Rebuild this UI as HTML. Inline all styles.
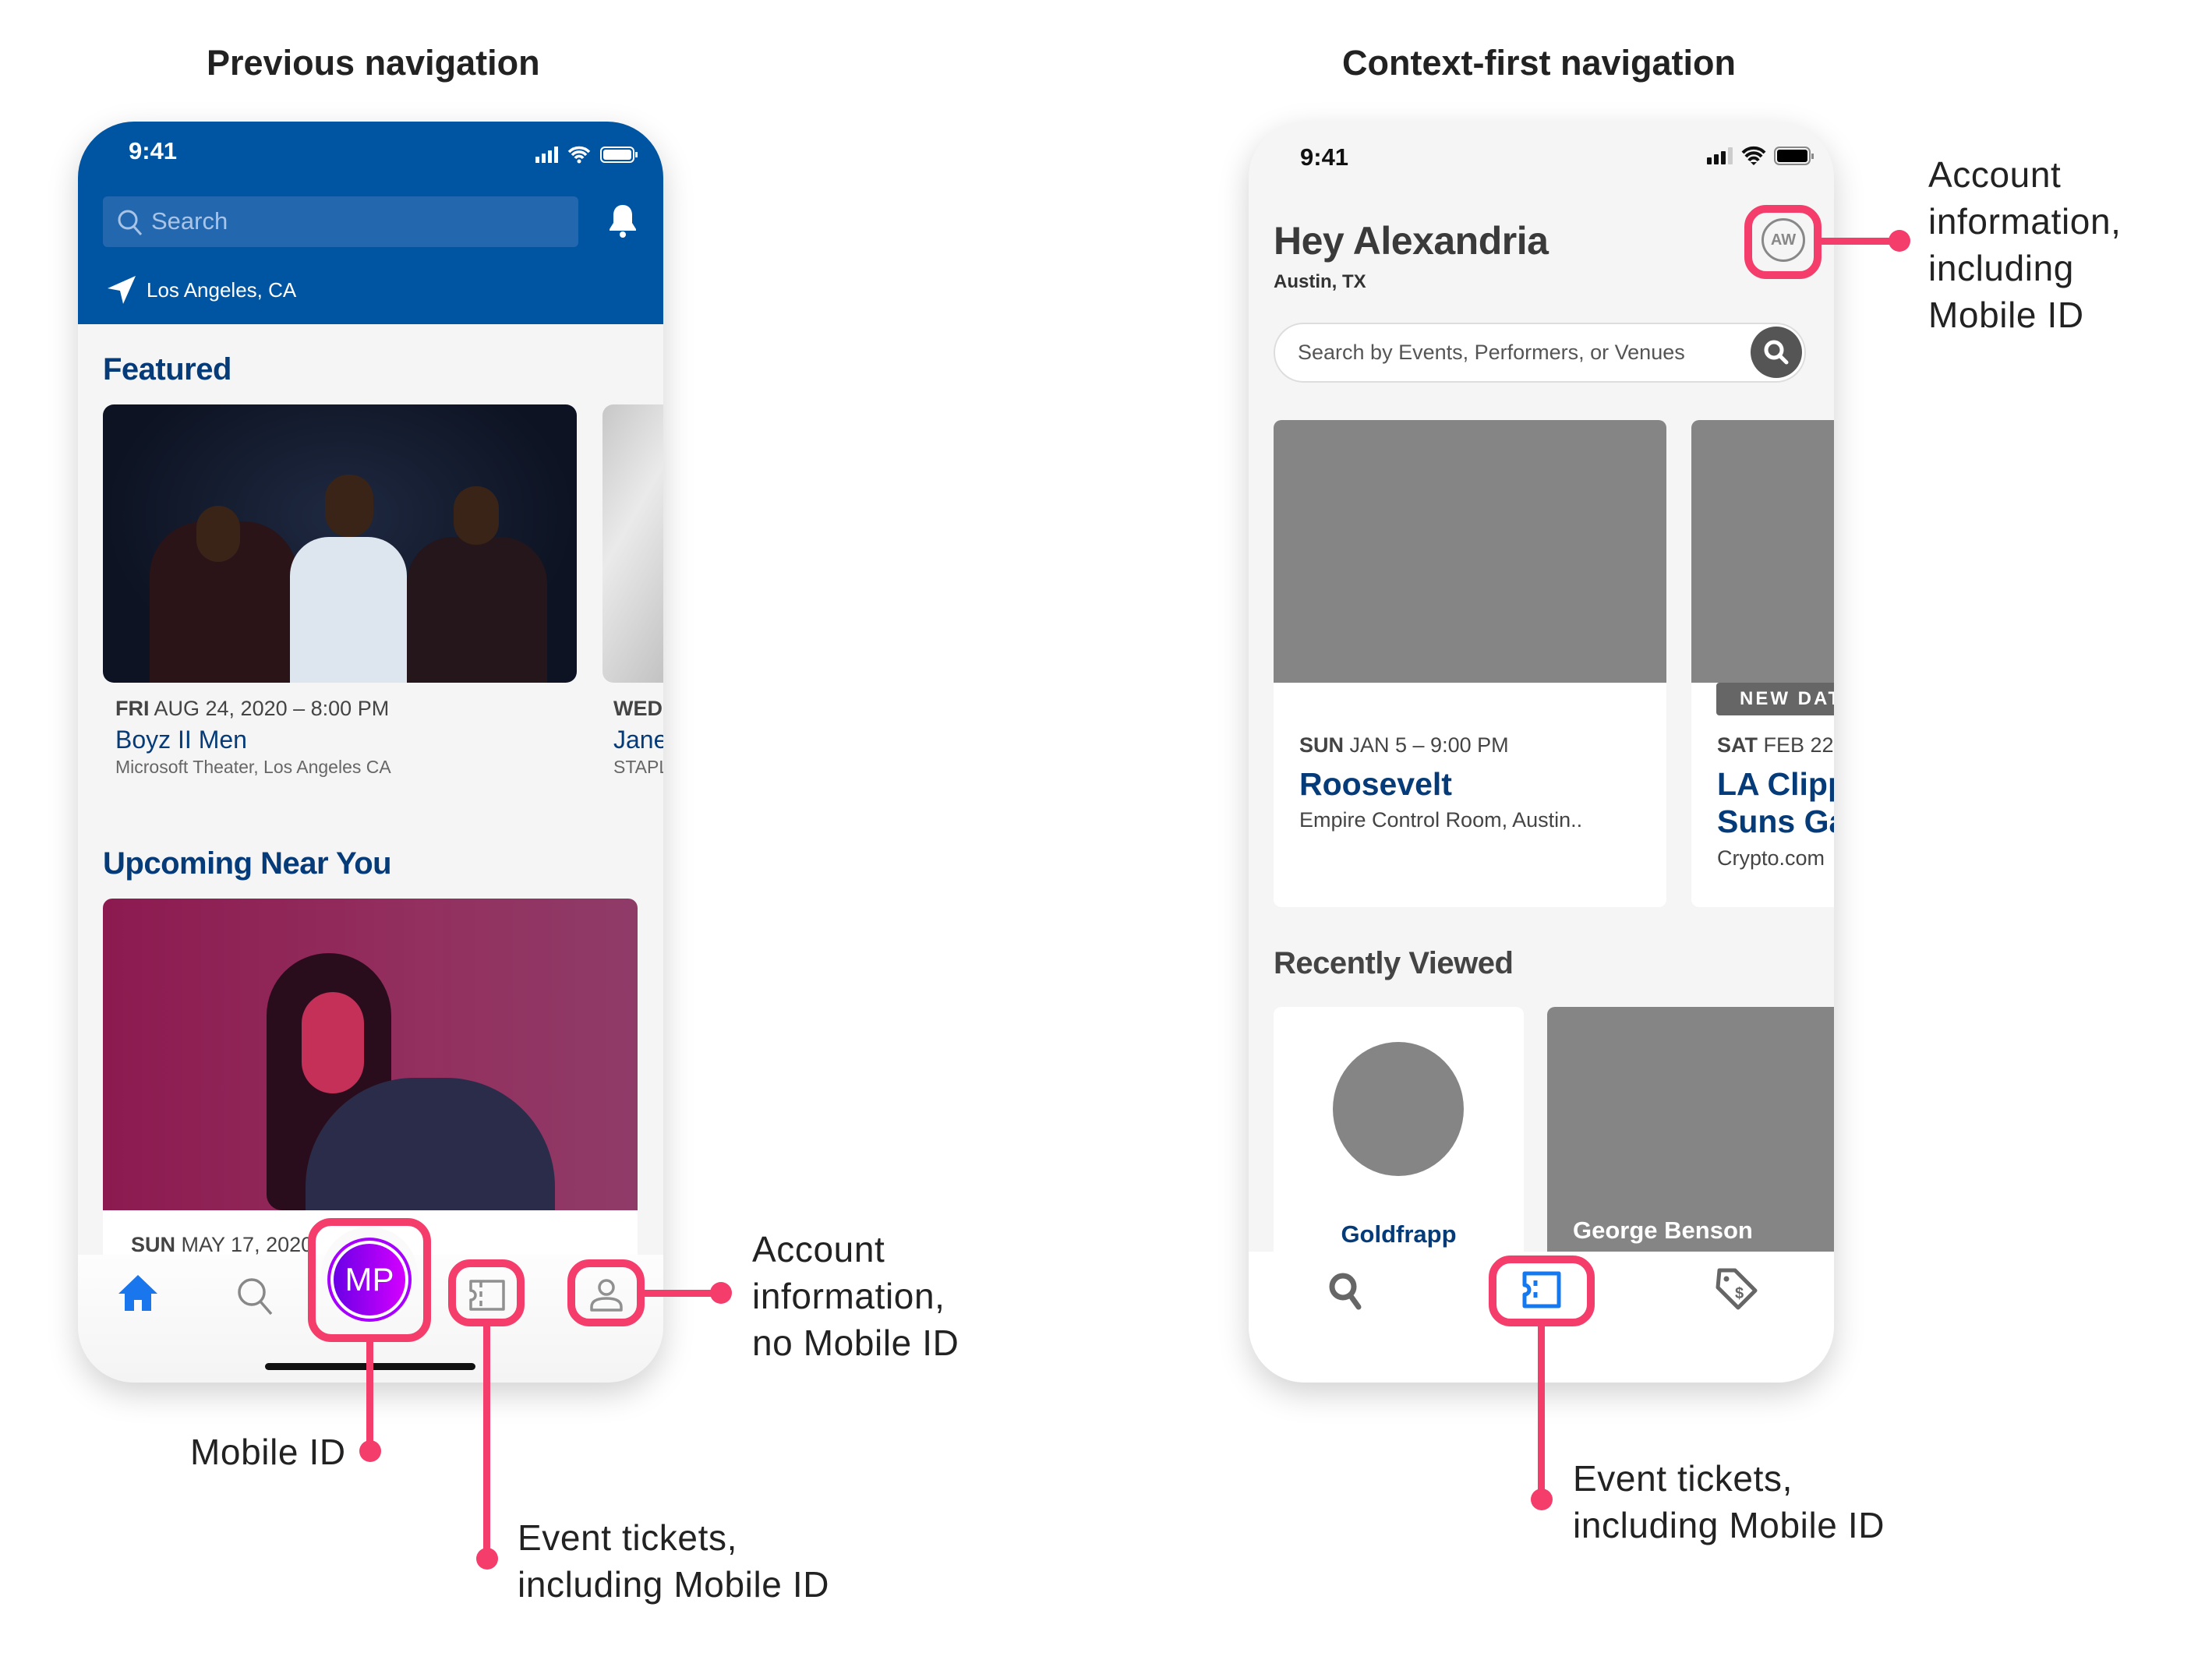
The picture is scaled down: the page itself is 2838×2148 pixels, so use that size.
<!DOCTYPE html>
<html><head><meta charset="utf-8">
<style>
*{margin:0;padding:0;box-sizing:border-box}
body{width:2838px;height:2148px;background:#fff;position:relative;overflow:hidden;font-family:"Liberation Sans",sans-serif;color:#222}
.a{position:absolute}
.t{position:absolute;white-space:nowrap;line-height:1}
.pink{border:10px solid #f53d6b;border-radius:30px}
.ln{position:absolute;background:#f53d6b}
.dot{position:absolute;width:28px;height:28px;border-radius:50%;background:#f53d6b}
.lbl{position:absolute;font-size:46px;color:#222;line-height:60px;white-space:nowrap;letter-spacing:0.6px}
</style></head><body>

<div class="t" style="left:265px;top:58px;font-size:45px;font-weight:bold;color:#222">Previous navigation</div>
<div class="t" style="left:1722px;top:58px;font-size:45px;font-weight:bold;color:#222">Context-first navigation</div>

<!-- LEFT PHONE -->
<div class="a" style="left:100px;top:156px;width:751px;height:1618px;border-radius:72px;background:#f5f5f5;overflow:hidden;box-shadow:0 14px 40px rgba(0,0,0,0.18)">
  <div class="a" style="left:0;top:0;width:751px;height:260px;background:#0055a3"></div>
  <div class="t" style="left:65px;top:22px;font-size:31px;color:#fff;font-weight:bold">9:41</div>
  <svg class="a" style="left:585px;top:27px" width="135" height="30" viewBox="0 0 135 30">
    <rect x="2" y="18" width="5" height="8" fill="#fff"/><rect x="10" y="14" width="5" height="12" fill="#fff"/><rect x="18" y="10" width="5" height="16" fill="#fff"/><rect x="26" y="5" width="5" height="21" fill="#fff"/>
    <path d="M45 12a18 18 0 0 1 26 0M49 16a12 12 0 0 1 18 0M53 20a6 6 0 0 1 10 0" stroke="#fff" stroke-width="3.5" fill="none"/><circle cx="58" cy="24" r="2.5" fill="#fff"/>
    <rect x="86" y="6" width="42" height="19" rx="5" fill="none" stroke="#fff" stroke-width="2"/><rect x="89" y="9" width="36" height="13" rx="3" fill="#fff"/><rect x="130" y="12" width="3" height="7" fill="#fff"/>
  </svg>
  <div class="a" style="left:32px;top:96px;width:610px;height:65px;border-radius:6px;background:#2368af"></div>
  <svg class="a" style="left:50px;top:112px" width="34" height="36" viewBox="0 0 34 36"><circle cx="14" cy="14" r="11" stroke="#a7c3e6" stroke-width="3" fill="none"/><path d="M22 23l9 10" stroke="#a7c3e6" stroke-width="3"/></svg>
  <div class="t" style="left:94px;top:112px;font-size:31px;color:#a9c4e6">Search</div>
  <svg class="a" style="left:680px;top:104px" width="38" height="46" viewBox="0 0 38 46"><path d="M19 3c-8 0-12 6-12 13v10l-5 8v2h34v-2l-5-8V16c0-7-4-13-12-13z" fill="#fff"/><circle cx="19" cy="41" r="4" fill="#fff"/></svg>
  <svg class="a" style="left:36px;top:196px" width="40" height="40" viewBox="0 0 40 40"><path d="M38 2L2 18l16 3 4 17z" fill="#fff"/></svg>
  <div class="t" style="left:88px;top:203px;font-size:26px;color:#fff">Los Angeles, CA</div>

  <div class="t" style="left:32px;top:298px;font-size:40px;color:#053b78;font-weight:bold;letter-spacing:-0.5px">Featured</div>
  <div class="a" style="left:32px;top:363px;width:608px;height:357px;border-radius:14px;overflow:hidden;background:radial-gradient(ellipse at 50% 40%,#1e2840 0%,#0d1322 70%)">
    <div class="a" style="left:60px;top:150px;width:190px;height:210px;border-radius:70px 70px 0 0;background:#2a1418"></div>
    <div class="a" style="left:240px;top:170px;width:150px;height:190px;border-radius:50px 50px 0 0;background:#dde6ee"></div>
    <div class="a" style="left:285px;top:90px;width:62px;height:80px;border-radius:30px;background:#3a2418"></div>
    <div class="a" style="left:390px;top:170px;width:180px;height:190px;border-radius:60px 60px 0 0;background:#24161a"></div>
    <div class="a" style="left:450px;top:105px;width:58px;height:75px;border-radius:28px;background:#3a2418"></div>
    <div class="a" style="left:120px;top:130px;width:56px;height:72px;border-radius:28px;background:#3a2418"></div>
  </div>
  <div class="a" style="left:673px;top:363px;width:100px;height:357px;border-radius:14px;background:linear-gradient(120deg,#c7c7c7,#eaeaea 40%,#bdbdbd)"></div>
  <div class="t" style="left:48px;top:740px;font-size:27px;color:#444"><b>FRI</b> AUG 24, 2020 – 8:00 PM</div>
  <div class="t" style="left:48px;top:777px;font-size:32px;color:#053b78">Boyz II Men</div>
  <div class="t" style="left:48px;top:817px;font-size:23px;color:#666">Microsoft Theater, Los Angeles CA</div>
  <div class="t" style="left:687px;top:740px;font-size:27px;color:#444;font-weight:bold">WED</div>
  <div class="t" style="left:687px;top:777px;font-size:32px;color:#053b78">Jane</div>
  <div class="t" style="left:687px;top:817px;font-size:23px;color:#666">STAPL</div>

  <div class="t" style="left:32px;top:932px;font-size:40px;color:#053b78;font-weight:bold;letter-spacing:-0.5px">Upcoming Near You</div>
  <div class="a" style="left:32px;top:997px;width:686px;height:400px;overflow:hidden;border-radius:12px 12px 0 0;background:linear-gradient(90deg,#8c1a50,#93305f 60%,#8f3b68)">
    <div class="a" style="left:210px;top:70px;width:160px;height:330px;border-radius:80px 80px 20px 20px;background:#2a0d1c"></div>
    <div class="a" style="left:255px;top:120px;width:80px;height:130px;border-radius:40px;background:#c43057"></div>
    <div class="a" style="left:260px;top:230px;width:320px;height:200px;border-radius:140px 140px 0 0;background:#2a2c4a"></div>
  </div>
  <div class="a" style="left:32px;top:1397px;width:686px;height:60px;background:#fff"></div>
  <div class="t" style="left:68px;top:1428px;font-size:27px;color:#444"><b>SUN</b> MAY 17, 2020</div>

  <div class="a" style="left:0;top:1454px;width:751px;height:164px;background:linear-gradient(#fdfdfd,#f4f4f4)"></div>
  <div class="a" style="left:312px;top:1418px;width:124px;height:124px;border-radius:50%;background:#fafafa"></div>
  <svg class="a" style="left:50px;top:1478px" width="54" height="50" viewBox="0 0 54 50"><path d="M27 2L2 26h8v22h12V34h10v14h12V26h8z" fill="#1976ec"/></svg>
  <svg class="a" style="left:203px;top:1482px" width="50" height="52" viewBox="0 0 50 52"><circle cx="20" cy="20" r="16" stroke="#888" stroke-width="3.5" fill="none"/><path d="M31 32l14 16" stroke="#888" stroke-width="3.5"/></svg>
  <div class="a" style="left:320px;top:1432px;width:108px;height:108px;border-radius:50%;border:4px solid #a600ff;background:#fff"></div>
  <div class="a" style="left:328px;top:1440px;width:92px;height:92px;border-radius:50%;background:linear-gradient(90deg,#6a00e6,#d400ff);color:#fff;font-size:42px;text-align:center;line-height:92px">MP</div>
  <svg class="a" style="left:500px;top:1485px" width="50" height="42" viewBox="0 0 50 42"><path d="M4 3h42v36H4V27a6 6 0 0 0 0-12z" fill="none" stroke="#909090" stroke-width="3.5" stroke-linejoin="round"/><path d="M17 4v34" stroke="#909090" stroke-width="3.5" stroke-dasharray="7 5"/></svg>
  <svg class="a" style="left:656px;top:1484px" width="44" height="44" viewBox="0 0 44 44"><circle cx="22" cy="12" r="9" fill="none" stroke="#909090" stroke-width="3.5"/><path d="M3 41v-4c0-7 6-11 19-11s19 4 19 11v4z" fill="none" stroke="#909090" stroke-width="3.5" stroke-linejoin="round"/></svg>
  <div class="a" style="left:240px;top:1593px;width:270px;height:9px;border-radius:5px;background:#111"></div>
</div>

<!-- left annotations -->
<div class="a pink" style="left:395px;top:1563px;width:158px;height:159px"></div>
<div class="a pink" style="left:575px;top:1616px;width:98px;height:86px;border-radius:28px"></div>
<div class="a pink" style="left:728px;top:1616px;width:99px;height:86px;border-radius:28px"></div>
<div class="ln" style="left:827px;top:1655px;width:98px;height:9px"></div>
<div class="dot" style="left:911px;top:1645px"></div>
<div class="lbl" style="left:965px;top:1573px">Account<br>information,<br>no Mobile ID</div>
<div class="ln" style="left:470px;top:1722px;width:9px;height:140px"></div>
<div class="dot" style="left:461px;top:1848px"></div>
<div class="lbl" style="left:244px;top:1833px">Mobile ID</div>
<div class="ln" style="left:620px;top:1702px;width:9px;height:298px"></div>
<div class="dot" style="left:611px;top:1986px"></div>
<div class="lbl" style="left:664px;top:1943px">Event tickets,<br>including Mobile ID</div>

<!-- RIGHT PHONE -->
<div class="a" style="left:1602px;top:156px;width:751px;height:1618px;border-radius:72px;background:#f5f5f5;overflow:hidden;box-shadow:0 14px 40px rgba(0,0,0,0.18)">
  <div class="t" style="left:66px;top:30px;font-size:31px;color:#111;font-weight:bold">9:41</div>
  <svg class="a" style="left:586px;top:30px" width="140" height="30" viewBox="0 0 140 30">
    <rect x="2" y="16" width="6" height="9" rx="1" fill="#111"/><rect x="11" y="12" width="6" height="13" rx="1" fill="#111"/><rect x="20" y="8" width="6" height="17" rx="1" fill="#111"/><rect x="29" y="3" width="6" height="22" rx="1" fill="#ccc"/>
    <path d="M48 10a19 19 0 0 1 28 0M52 15a13 13 0 0 1 20 0M56 20a7 7 0 0 1 12 0" stroke="#111" stroke-width="4" fill="none"/><path d="M58 22l4 4 4-4z" fill="#111"/>
    <rect x="89" y="3" width="45" height="22" rx="6" fill="none" stroke="#888" stroke-width="2"/><rect x="92" y="6" width="39" height="16" rx="3" fill="#000"/><rect x="136" y="11" width="3" height="7" fill="#888"/>
  </svg>
  <div class="t" style="left:32px;top:128px;font-size:50px;color:#3a3a3a;font-weight:bold;letter-spacing:-0.5px">Hey Alexandria</div>
  <div class="t" style="left:32px;top:194px;font-size:24px;color:#333;font-weight:bold">Austin, TX</div>
  <div class="a" style="left:658px;top:124px;width:56px;height:56px;border-radius:50%;border:3px solid #888;color:#888;font-size:20px;text-align:center;line-height:50px;font-weight:bold">AW</div>
  <div class="a" style="left:32px;top:258px;width:683px;height:77px;border-radius:40px;background:#fff;border:2px solid #ddd"></div>
  <div class="t" style="left:63px;top:283px;font-size:27px;color:#555">Search by Events, Performers, or Venues</div>
  <div class="a" style="left:644px;top:263px;width:66px;height:66px;border-radius:50%;background:#555"></div>
  <svg class="a" style="left:656px;top:275px" width="42" height="42" viewBox="0 0 42 42"><circle cx="18" cy="18" r="10" stroke="#fff" stroke-width="5" fill="none"/><path d="M25 25l9 9" stroke="#fff" stroke-width="5" stroke-linecap="round"/></svg>

  <div class="a" style="left:32px;top:383px;width:504px;height:625px;border-radius:10px;background:#fff;overflow:hidden"><div style="width:100%;height:337px;background:#858585"></div></div>
  <div class="t" style="left:65px;top:787px;font-size:27px;color:#444"><b>SUN</b> JAN 5 – 9:00 PM</div>
  <div class="t" style="left:65px;top:830px;font-size:41px;color:#053b78;font-weight:bold">Roosevelt</div>
  <div class="t" style="left:65px;top:883px;font-size:27px;color:#444">Empire Control Room, Austin..</div>
  <div class="a" style="left:568px;top:383px;width:200px;height:625px;border-radius:10px;background:#fff;overflow:hidden"><div style="width:100%;height:337px;background:#858585"></div></div>
  <div class="a" style="left:600px;top:720px;width:200px;height:42px;border-radius:4px 0 0 4px;background:#666"></div>
  <div class="t" style="left:630px;top:729px;font-size:24px;color:#fff;font-weight:bold;letter-spacing:3px">NEW DAT</div>
  <div class="t" style="left:601px;top:787px;font-size:27px;color:#444"><b>SAT</b> FEB 22</div>
  <div class="t" style="left:601px;top:830px;font-size:41px;color:#053b78;font-weight:bold">LA Clipp</div>
  <div class="t" style="left:601px;top:878px;font-size:41px;color:#053b78;font-weight:bold">Suns Ga</div>
  <div class="t" style="left:601px;top:932px;font-size:27px;color:#444">Crypto.com</div>

  <div class="t" style="left:32px;top:1060px;font-size:40px;color:#444;font-weight:bold;letter-spacing:-0.5px">Recently Viewed</div>
  <div class="a" style="left:32px;top:1136px;width:321px;height:330px;border-radius:10px;background:#fff"></div>
  <div class="a" style="left:108px;top:1181px;width:168px;height:172px;border-radius:50%;background:#858585"></div>
  <div class="t" style="left:32px;top:1412px;width:321px;text-align:center;font-size:31px;color:#053b78;font-weight:bold">Goldfrapp</div>
  <div class="a" style="left:383px;top:1136px;width:380px;height:330px;border-radius:10px 0 0 0;background:#858585"></div>
  <div class="t" style="left:416px;top:1407px;font-size:31px;color:#fff;font-weight:bold">George Benson</div>

  <div class="a" style="left:0;top:1450px;width:751px;height:168px;background:#fff"></div>
  <svg class="a" style="left:100px;top:1474px" width="50" height="54" viewBox="0 0 50 54"><circle cx="21" cy="21" r="14" stroke="#666" stroke-width="7" fill="none"/><path d="M31 33l10 14" stroke="#666" stroke-width="7" stroke-linecap="round"/></svg>
  <svg class="a" style="left:350px;top:1475px" width="52" height="48" viewBox="0 0 52 48"><path d="M4 3h44v42H4V30a6 6 0 0 0 0-12z" fill="none" stroke="#1479f0" stroke-width="5" stroke-linejoin="round"/><path d="M18 12v7M18 27v7" stroke="#1479f0" stroke-width="5"/></svg>
  <svg class="a" style="left:598px;top:1470px" width="56" height="56" viewBox="0 0 56 56"><path d="M6 4h20l26 26-22 22L4 26z" fill="none" stroke="#666" stroke-width="5" stroke-linejoin="round"/><circle cx="15" cy="15" r="3.5" fill="#666"/><text x="26" y="40" font-family="Liberation Sans" font-size="20" font-weight="bold" fill="#666">$</text></svg>
</div>

<!-- right annotations -->
<div class="a pink" style="left:2238px;top:263px;width:99px;height:95px;border-radius:28px"></div>
<div class="ln" style="left:2337px;top:305px;width:100px;height:9px"></div>
<div class="dot" style="left:2423px;top:295px"></div>
<div class="lbl" style="left:2474px;top:194px">Account<br>information,<br>including<br>Mobile ID</div>
<div class="a pink" style="left:1910px;top:1611px;width:136px;height:91px;border-radius:28px"></div>
<div class="ln" style="left:1973px;top:1702px;width:9px;height:222px"></div>
<div class="dot" style="left:1964px;top:1910px"></div>
<div class="lbl" style="left:2018px;top:1867px">Event tickets,<br>including Mobile ID</div>

</body></html>
